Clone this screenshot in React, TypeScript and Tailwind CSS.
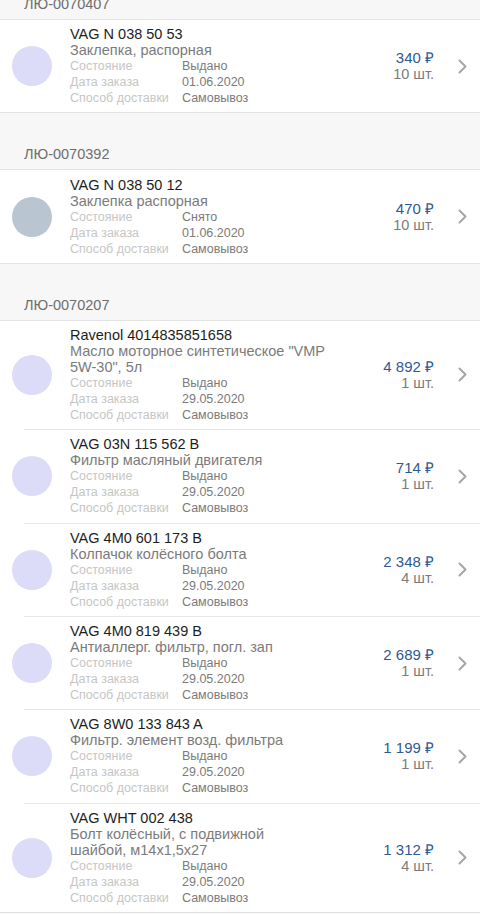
import React from 'react';

type Item = {
  code: string;
  name: string;
  status: string;
  date: string;
  delivery: string;
  price: string;
  qty: string;
  dot: string;
};

type Order = { id: string; items: Item[] };

const orders: Order[] = [
  {
    id: 'ЛЮ-0070407',
    items: [
      {
        code: 'VAG N 038 50 53',
        name: 'Заклепка, распорная',
        status: 'Выдано',
        date: '01.06.2020',
        delivery: 'Самовывоз',
        price: '340 ₽',
        qty: '10 шт.',
        dot: 'bg-[#dcdcf8]',
      },
    ],
  },
  {
    id: 'ЛЮ-0070392',
    items: [
      {
        code: 'VAG N 038 50 12',
        name: 'Заклепка распорная',
        status: 'Снято',
        date: '01.06.2020',
        delivery: 'Самовывоз',
        price: '470 ₽',
        qty: '10 шт.',
        dot: 'bg-[#b9c6d2]',
      },
    ],
  },
  {
    id: 'ЛЮ-0070207',
    items: [
      {
        code: 'Ravenol 4014835851658',
        name: 'Масло моторное синтетическое "VMP\n5W-30", 5л',
        status: 'Выдано',
        date: '29.05.2020',
        delivery: 'Самовывоз',
        price: '4 892 ₽',
        qty: '1 шт.',
        dot: 'bg-[#dcdcf8]',
      },
      {
        code: 'VAG 03N 115 562 B',
        name: 'Фильтр масляный двигателя',
        status: 'Выдано',
        date: '29.05.2020',
        delivery: 'Самовывоз',
        price: '714 ₽',
        qty: '1 шт.',
        dot: 'bg-[#dcdcf8]',
      },
      {
        code: 'VAG 4M0 601 173 B',
        name: 'Колпачок колёсного болта',
        status: 'Выдано',
        date: '29.05.2020',
        delivery: 'Самовывоз',
        price: '2 348 ₽',
        qty: '4 шт.',
        dot: 'bg-[#dcdcf8]',
      },
      {
        code: 'VAG 4M0 819 439 B',
        name: 'Антиаллерг. фильтр, погл. зап',
        status: 'Выдано',
        date: '29.05.2020',
        delivery: 'Самовывоз',
        price: '2 689 ₽',
        qty: '1 шт.',
        dot: 'bg-[#dcdcf8]',
      },
      {
        code: 'VAG 8W0 133 843 A',
        name: 'Фильтр. элемент возд. фильтра',
        status: 'Выдано',
        date: '29.05.2020',
        delivery: 'Самовывоз',
        price: '1 199 ₽',
        qty: '1 шт.',
        dot: 'bg-[#dcdcf8]',
      },
      {
        code: 'VAG WHT 002 438',
        name: 'Болт колёсный, с подвижной\nшайбой, м14х1,5х27',
        status: 'Выдано',
        date: '29.05.2020',
        delivery: 'Самовывоз',
        price: '1 312 ₽',
        qty: '4 шт.',
        dot: 'bg-[#dcdcf8]',
      },
    ],
  },
];

function Chevron() {
  return (
    <svg width="9" height="15" viewBox="0 0 9 15" className="shrink-0">
      <polyline
        points="1.5,1.5 7.5,7.5 1.5,13.5"
        fill="none"
        stroke="#a6a6a6"
        strokeWidth="2"
        strokeLinecap="round"
        strokeLinejoin="round"
      />
    </svg>
  );
}

function ItemRow({ item }: { item: Item }) {
  return (
    <div className="flex items-center py-[6.2px]">
      <div className={`ml-3 w-10 h-10 rounded-full shrink-0 ${item.dot}`} />
      <div className="ml-[18px] flex-1 min-w-0 leading-4">
        <div className="text-[14.5px] text-[#1d1d1d]">{item.code}</div>
        <div className="text-[14.5px] text-[#7b7b7b] whitespace-pre-line">{item.name}</div>
        <div className="grid grid-cols-[112px_1fr] text-[12.5px]">
          <span className="text-[#c6c6c6]">Состояние</span>
          <span className="text-[#7b7b7b]">{item.status}</span>
          <span className="text-[#c6c6c6]">Дата заказа</span>
          <span className="text-[#7b7b7b]">{item.date}</span>
          <span className="text-[#c6c6c6]">Способ доставки</span>
          <span className="text-[#7b7b7b]">{item.delivery}</span>
        </div>
      </div>
      <div className="text-right leading-4 shrink-0">
        <div className="text-[15px] text-[#2e5a93]">{item.price}</div>
        <div className="text-[14.5px] text-[#7b7b7b]">{item.qty}</div>
      </div>
      <div className="ml-6 mr-[13px]">
        <Chevron />
      </div>
    </div>
  );
}

export default function App() {
  return (
    <div
      className="h-[914px] overflow-hidden bg-[#f7f7f7]"
      style={{ fontFamily: '"Liberation Sans", Arial, sans-serif' }}
    >
      <div className="-mt-[37px]">
        {orders.map((order) => (
          <section key={order.id}>
            <div className="h-[56px] flex items-end px-6 pb-[7px]">
              <span className="text-[14.5px] leading-4 text-[#6e6e6e]">{order.id}</span>
            </div>
            <div className="bg-white border-y border-[#e3e3e3]">
              {order.items.map((item, i) => (
                <div key={item.code}>
                  {i > 0 && <div className="ml-6 h-px bg-[#e6e6e6]" />}
                  <ItemRow item={item} />
                </div>
              ))}
            </div>
          </section>
        ))}
      </div>
    </div>
  );
}
